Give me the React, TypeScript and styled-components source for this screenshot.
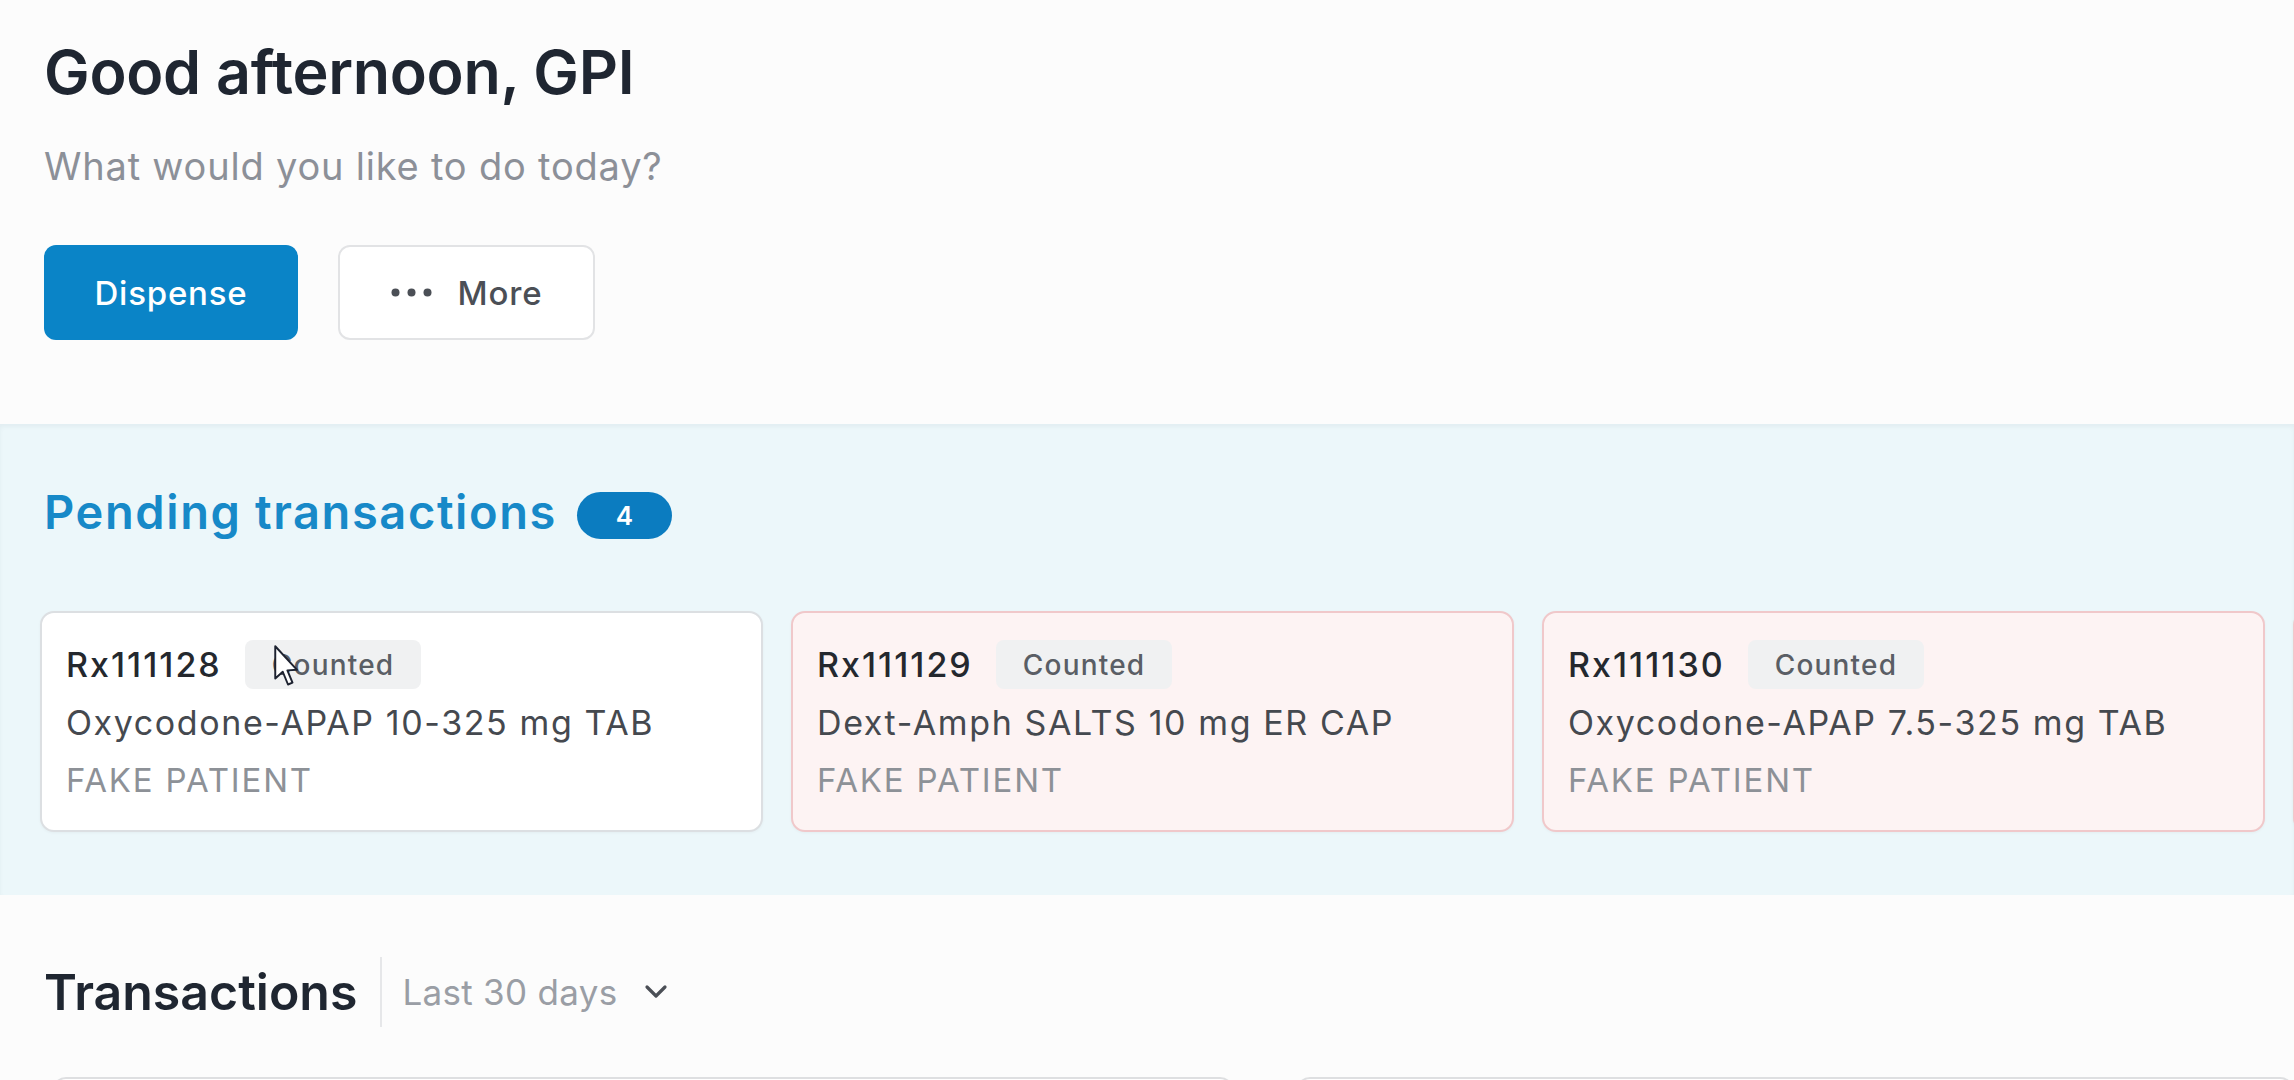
import styled, { createGlobalStyle } from "styled-components";

const GlobalStyle = createGlobalStyle`
  html, body {
    margin: 0;
    padding: 0;
    background: #fcfcfc;
    font-family: Inter, "Noto Sans", sans-serif;
    overflow: hidden;
  }
`;

type Pending = {
  rx: string;
  drug: string;
  patient: string;
  flagged: boolean;
};

const pending: Pending[] = [
  { rx: "Rx111128", drug: "Oxycodone-APAP 10-325 mg TAB", patient: "FAKE PATIENT", flagged: false },
  { rx: "Rx111129", drug: "Dext-Amph SALTS 10 mg ER CAP", patient: "FAKE PATIENT", flagged: true },
  { rx: "Rx111130", drug: "Oxycodone-APAP 7.5-325 mg TAB", patient: "FAKE PATIENT", flagged: true },
  { rx: "Rx111131", drug: "Oxycodone-APAP 5-325 mg TAB", patient: "FAKE PATIENT", flagged: true },
];

const App = () => {
  return (
    <Page>
      <GlobalStyle />
      <Welcome>
        <Greeting>Good afternoon, GPI</Greeting>
        <Prompt>What would you like to do today?</Prompt>
        <Actions>
          <PrimaryButton>Dispense</PrimaryButton>
          <GhostButton>
            <svg width="41" height="9" viewBox="0 0 41 9">
              <circle cx="4.5" cy="4.5" r="4" fill="#4b4f56" />
              <circle cx="20.5" cy="4.5" r="4" fill="#4b4f56" />
              <circle cx="36.5" cy="4.5" r="4" fill="#4b4f56" />
            </svg>
            More
          </GhostButton>
        </Actions>
      </Welcome>

      <PendingSection>
        <SectionHead>
          <PendingTitle>Pending transactions</PendingTitle>
          <CountBadge>4</CountBadge>
        </SectionHead>
        <CardRow>
          {pending.map((p, i) => (
            <TxCard key={p.rx} $flagged={p.flagged}>
              <TopLine>
                <RxNumber>{p.rx}</RxNumber>
                <Status>
                  Counted
                  {i === 0 && (
                    <Cursor width="27" height="45" viewBox="0 0 18 30">
                      <path
                        d="M1.5 1.5 L1.5 23 L6.5 18.5 L10 27 L13 25.8 L9.6 17.6 L16 17.2 Z"
                        fill="#ffffff"
                        stroke="#1d2230"
                        strokeWidth="1.3"
                        strokeLinejoin="round"
                      />
                    </Cursor>
                  )}
                </Status>
              </TopLine>
              <DrugName>{p.drug}</DrugName>
              <PatientName>{p.patient}</PatientName>
            </TxCard>
          ))}
        </CardRow>
      </PendingSection>

      <Transactions>
        <TxHead>
          <TxTitle>Transactions</TxTitle>
          <Divider />
          <RangePicker>
            Last 30 days
            <svg width="26" height="16" viewBox="0 0 26 16">
              <polyline
                points="4,3 13,12 22,3"
                fill="none"
                stroke="#4b4f56"
                strokeWidth="3.2"
                strokeLinecap="round"
                strokeLinejoin="round"
              />
            </svg>
          </RangePicker>
        </TxHead>
        <StatGrid>
          <StatCard />
          <StatCard />
        </StatGrid>
      </Transactions>
    </Page>
  );
};

const Page = styled.div`
  width: 2294px;
  height: 1080px;
  overflow: hidden;
  background: #fcfcfc;
`;

const Welcome = styled.section`
  height: 424px;
  box-sizing: border-box;
  padding: 36px 44px 0;
`;

const Greeting = styled.h1`
  margin: 0;
  font-size: 61px;
  line-height: 72px;
  font-weight: 600;
  color: #1f2631;
  letter-spacing: -0.3px;
`;

const Prompt = styled.p`
  margin: 35px 0 0;
  font-size: 38px;
  line-height: 46px;
  font-weight: 400;
  color: #8c9098;
  letter-spacing: 0.8px;
`;

const Actions = styled.div`
  display: flex;
  gap: 40px;
  margin-top: 56px;
`;

const PrimaryButton = styled.button`
  width: 254px;
  height: 95px;
  border: none;
  border-radius: 12px;
  background: #0a84c7;
  color: #ffffff;
  font-family: inherit;
  font-size: 33px;
  font-weight: 500;
  letter-spacing: 0.8px;
`;

const GhostButton = styled.button`
  display: flex;
  align-items: center;
  justify-content: center;
  gap: 26px;
  width: 257px;
  height: 95px;
  border: 2px solid #e2e3e5;
  border-radius: 12px;
  background: #ffffff;
  color: #4b4f56;
  font-family: inherit;
  font-size: 33px;
  font-weight: 500;
  letter-spacing: 0.8px;
`;

const PendingSection = styled.section`
  height: 471px;
  box-sizing: border-box;
  padding: 60px 0 0 40px;
  background: #ecf7fa;
  box-shadow: inset 0 3px 4px rgba(60, 90, 100, 0.06);
`;

const SectionHead = styled.div`
  display: flex;
  align-items: center;
  gap: 20px;
  padding-left: 4px;
  height: 56px;
`;

const PendingTitle = styled.h2`
  margin: 0;
  font-size: 47px;
  line-height: 56px;
  font-weight: 600;
  color: #1789c8;
  letter-spacing: 1.6px;
`;

const CountBadge = styled.span`
  display: inline-flex;
  align-items: center;
  justify-content: center;
  width: 95px;
  height: 47px;
  border-radius: 24px;
  background: #0b7cc0;
  color: #ffffff;
  font-size: 26px;
  font-weight: 600;
  margin-top: 6px;
`;

const CardRow = styled.div`
  display: flex;
  gap: 28px;
  margin-top: 71px;
`;

const TxCard = styled.div<{ $flagged: boolean }>`
  flex: 0 0 723px;
  height: 221px;
  box-sizing: border-box;
  padding: 27px 24px 0;
  border-radius: 14px;
  border: 2px solid ${(p) => (p.$flagged ? "#f0c8ca" : "#dcdfe2")};
  background: ${(p) => (p.$flagged ? "#fdf3f3" : "#ffffff")};
  box-shadow: 0 1px 3px rgba(0, 0, 0, 0.04);
`;

const TopLine = styled.div`
  display: flex;
  align-items: center;
  gap: 23px;
  height: 49px;
`;

const RxNumber = styled.span`
  font-size: 34px;
  font-weight: 500;
  color: #24282e;
  letter-spacing: 2px;
`;

const Status = styled.span`
  position: relative;
  display: inline-flex;
  align-items: center;
  height: 49px;
  padding: 0 27px;
  border-radius: 8px;
  background: #f0f1f2;
  color: #5a5e65;
  font-size: 28px;
  font-weight: 500;
  letter-spacing: 1.2px;
`;

const Cursor = styled.svg`
  position: absolute;
  left: 28px;
  top: 4px;
`;

const DrugName = styled.div`
  margin-top: 14px;
  font-size: 34px;
  line-height: 40px;
  color: #45494f;
  letter-spacing: 1.6px;
`;

const PatientName = styled.div`
  margin-top: 17px;
  font-size: 33px;
  line-height: 40px;
  color: #8d9197;
  letter-spacing: 1.8px;
`;

const Transactions = styled.section`
  padding: 62px 0 0 44px;
`;

const TxHead = styled.div`
  display: flex;
  align-items: center;
  height: 70px;
`;

const TxTitle = styled.h2`
  margin: 0;
  font-size: 50px;
  line-height: 60px;
  font-weight: 600;
  color: #1f2631;
`;

const Divider = styled.span`
  width: 2px;
  height: 70px;
  background: #e6e7e9;
  margin: 0 20px 0 23px;
`;

const RangePicker = styled.div`
  display: flex;
  align-items: center;
  gap: 26px;
  font-size: 35px;
  color: #9a9ea5;
  letter-spacing: 0.3px;
`;

const StatGrid = styled.div`
  display: grid;
  grid-template-columns: 1182px 1fr;
  gap: 62px;
  margin-top: 50px;
  padding-left: 8px;
`;

const StatCard = styled.div`
  height: 300px;
  border: 2px solid #dedfe1;
  border-radius: 14px;
  background: #ffffff;
`;

export default App;
